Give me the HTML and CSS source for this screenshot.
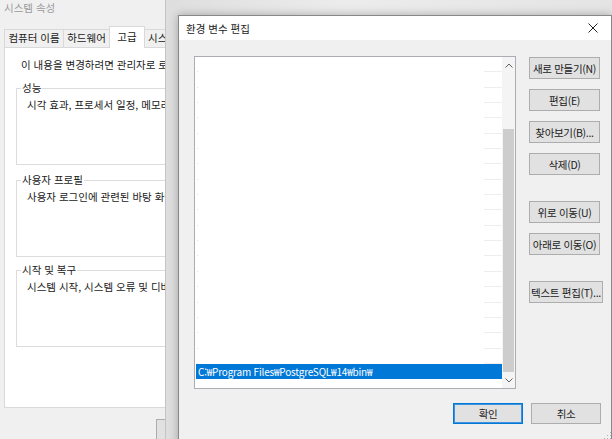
FILE: index.html
```html
<!DOCTYPE html>
<html lang="ko">
<head>
    <meta charset="UTF-8">
    <title>환경 변수 편집</title>
    <link rel="stylesheet" href="styles.css">
</head>
<body>
    <!-- 뒤쪽 창: 시스템 속성 -->
    <div class="sys-window">
        <div class="sys-title">시스템 속성</div>
        <div class="tabs">
            <span class="tab tab-name">컴퓨터 이름</span>
            <span class="tab tab-hw">하드웨어</span>
            <span class="tab tab-adv active">고급</span>
            <span class="tab tab-prot">시스</span>
        </div>
        <div class="tab-panel">
            <p class="notice">이 내용을 변경하려면 관리자로 로그온해야 합니다.</p>
            <fieldset class="group">
                <legend>성능</legend>
                <p>시각 효과, 프로세서 일정, 메모리 사용 및 가상 메모리</p>
            </fieldset>
            <fieldset class="group">
                <legend>사용자 프로필</legend>
                <p>사용자 로그인에 관련된 바탕 화면 설정</p>
            </fieldset>
            <fieldset class="group">
                <legend>시작 및 복구</legend>
                <p>시스템 시작, 시스템 오류 및 디버깅 정보</p>
            </fieldset>
        </div>
        <div class="sys-footer">
            <button class="win-btn sys-ok"></button>
        </div>
    </div>

    <div class="behind-window"></div>

    <!-- 앞쪽 창: 환경 변수 편집 -->
    <div class="dialog">
        <div class="dialog-title">
            <span>환경 변수 편집</span>
            <svg class="close-x" width="10" height="10" viewBox="0 0 10 10">
                <path d="M0.5 0.5 L9.5 9.5 M9.5 0.5 L0.5 9.5" stroke="#222" stroke-width="1" fill="none"/>
            </svg>
        </div>
        <div class="dialog-body">
            <div class="listbox">
                <div class="rows" id="rows"></div>
                <div class="scrollbar">
                    <div class="sb-arrow">
                        <svg width="8" height="5" viewBox="0 0 8 5"><path d="M0.5 4.5 L4 1 L7.5 4.5" stroke="#606060" fill="none"/></svg>
                    </div>
                    <div class="sb-track"><div class="sb-thumb"></div></div>
                    <div class="sb-arrow">
                        <svg width="8" height="5" viewBox="0 0 8 5"><path d="M0.5 0.5 L4 4 L7.5 0.5" stroke="#606060" fill="none"/></svg>
                    </div>
                </div>
            </div>
            <div class="side-buttons">
                <button class="win-btn">새로 만들기(N)</button>
                <button class="win-btn">편집(E)</button>
                <button class="win-btn">찾아보기(B)...</button>
                <button class="win-btn">삭제(D)</button>
                <button class="win-btn spaced">위로 이동(U)</button>
                <button class="win-btn">아래로 이동(O)</button>
                <button class="win-btn spaced wide">텍스트 편집(T)...</button>
            </div>
        </div>
        <div class="dialog-footer">
            <button class="win-btn default">확인</button>
            <button class="win-btn">취소</button>
        </div>
        <svg class="grip" width="8" height="8" viewBox="0 0 8 8">
            <rect x="6" y="0" width="1" height="1" fill="#b5b5b5"/>
            <rect x="3" y="3" width="1" height="1" fill="#b5b5b5"/>
            <rect x="6" y="3" width="1" height="1" fill="#b5b5b5"/>
            <rect x="0" y="6" width="1" height="1" fill="#b5b5b5"/>
            <rect x="3" y="6" width="1" height="1" fill="#b5b5b5"/>
            <rect x="6" y="6" width="1" height="1" fill="#b5b5b5"/>
        </svg>
    </div>

    <script>
        // 목록 행 만들기 (마지막 항목만 선택됨)
        var paths = [];
        for (var i = 0; i < 20; i++) paths.push('');
        paths.push('C:\u20A9Program Files\u20A9PostgreSQL\u20A914\u20A9bin\u20A9');

        var rows = document.getElementById('rows');
        paths.forEach(function (p, index) {
            var row = document.createElement('div');
            row.className = 'row';
            if (index === paths.length - 1) {
                row.className += ' selected';
                row.textContent = p;
            }
            rows.appendChild(row);
        });
    </script>
</body>
</html>
```

FILE: styles.css
```css
body {
    margin: 0;
    width: 612px;
    height: 439px;
    overflow: hidden;
    position: relative;
    background: #f0f0f0;
    font-family: "Noto Sans CJK KR", "Noto Sans", sans-serif;
    font-size: 10.5px;
    color: #1a1a1a;
}
button {
    font-family: inherit;
    font-size: 10.5px;
    letter-spacing: -0.3px;
    color: #1a1a1a;
}

/* 시스템 속성 */
.sys-window {
    width: 420px;
}
.sys-title {
    height: 26px;
    line-height: 16px;
    padding-left: 4px;
    color: #9b9b9b;
}
.tabs {
    display: flex;
    align-items: flex-end;
    height: 21px;
    padding-left: 4px;
}
.tab {
    box-sizing: border-box;
    height: 18px;
    line-height: 16px;
    text-align: center;
    border: 1px solid #d9d9d9;
    border-bottom: none;
    margin-right: -1px;
    background: #f0f0f0;
    white-space: nowrap;
    overflow: hidden;
}
.tab-name { width: 60px; }
.tab-hw { width: 47px; }
.tab-adv { width: 36px; }
.tab-prot {
    width: 24px;
    text-align: left;
    padding-left: 3px;
    border-right: none;
}
.tab.active {
    height: 22px;
    line-height: 20px;
    background: #fff;
    position: relative;
    z-index: 1;
    margin-bottom: -1px;
}
.tab-panel {
    box-sizing: border-box;
    width: 400px;
    height: 361px;
    margin-left: 4px;
    padding: 9px 0 0 11px;
    background: #fff;
    border: 1px solid #d9d9d9;
}
.notice {
    margin: 0 0 7px 5px;
    line-height: 16px;
    white-space: nowrap;
}
.group {
    box-sizing: border-box;
    height: 85px;
    margin: 0 0 7px 0;
    padding: 0 0 0 10px;
    border: 1px solid #dcdcdc;
    min-width: 0;
}
.group + .group + .group {
    margin-top: -2px;
}
.group legend {
    padding: 0 1px;
    margin-left: -6px;
    line-height: 16px;
}
.group p {
    margin: 1px 0 0 0;
    line-height: 16px;
    white-space: nowrap;
}
.sys-footer {
    padding: 11px 0 0 156px;
}
.sys-ok {
    width: 75px;
    height: 22px;
}

/* 가려진 창의 가장자리 */
.behind-window {
    position: absolute;
    left: 165px;
    top: 0;
    right: 0;
    bottom: 0;
    border-left: 1px solid #c4c4c4;
    background: linear-gradient(to right, #dedede, #ececec 40%, #e4e4e4);
}

/* 환경 변수 편집 */
.dialog {
    position: absolute;
    left: 178px;
    top: 15px;
    width: 434px;
    height: 440px;
    box-sizing: border-box;
    background: #f0f0f0;
    border: 1px solid #888;
    box-shadow: 0 0 9px rgba(0, 0, 0, 0.28);
}
.dialog-title {
    height: 24px;
    background: #fff;
    display: flex;
    align-items: center;
    justify-content: space-between;
    padding: 0 13px 0 7px;
}
.close-x {
    display: block;
}
.dialog-body {
    display: flex;
    padding: 16px 0 0 15px;
}
.listbox {
    box-sizing: border-box;
    width: 322px;
    height: 333px;
    display: flex;
    background: #fff;
    border: 1px solid #abadb3;
}
.rows {
    flex: 1;
    overflow: hidden;
}
.row {
    position: relative;
    height: 15.35px;
    box-sizing: border-box;
}
.row::after {
    content: "";
    position: absolute;
    right: 0;
    bottom: 0;
    width: 18px;
    border-bottom: 1px solid #eeeeee;
}
.row::before {
    content: "";
    position: absolute;
    left: 2px;
    bottom: 0;
    width: 1px;
    height: 1px;
    background: #e4e4e4;
}
.row.selected {
    margin-left: 1px;
    background: #0078d7;
    color: #fff;
    font-size: 10px;
    letter-spacing: -0.2px;
    line-height: 15px;
    padding-left: 2px;
    white-space: nowrap;
}
.row.selected::after,
.row.selected::before {
    display: none;
}
.scrollbar {
    width: 13px;
    display: flex;
    flex-direction: column;
    background: #f4f4f4;
}
.sb-arrow {
    height: 16px;
    display: flex;
    align-items: center;
    justify-content: center;
}
.sb-arrow svg {
    display: block;
}
.sb-track {
    flex: 1;
}
.sb-thumb {
    margin: 56px 1px 0 1px;
    height: 243px;
    background: #cdcdcd;
}
.side-buttons {
    display: flex;
    flex-direction: column;
    align-items: flex-start;
    margin-left: 13px;
    padding-top: 1px;
}
.win-btn {
    box-sizing: border-box;
    width: 71px;
    height: 22px;
    padding: 0;
    background: #e1e1e1;
    border: 1px solid #adadad;
    white-space: nowrap;
    overflow: hidden;
}
.side-buttons .win-btn {
    margin-bottom: 10px;
}
.side-buttons .spaced {
    margin-top: 16px;
}
.side-buttons .wide {
    width: 74px;
}
.dialog-footer {
    display: flex;
    justify-content: flex-end;
    gap: 8px;
    padding: 14px 10px 0 0;
}
.dialog-footer .win-btn {
    width: 70px;
    height: 21px;
}
.win-btn.default {
    border: 1px solid #0078d7;
    box-shadow: inset 0 0 0 1px #3c92dc;
}
.grip {
    position: absolute;
    left: 425px;
    top: 416px;
}
```
